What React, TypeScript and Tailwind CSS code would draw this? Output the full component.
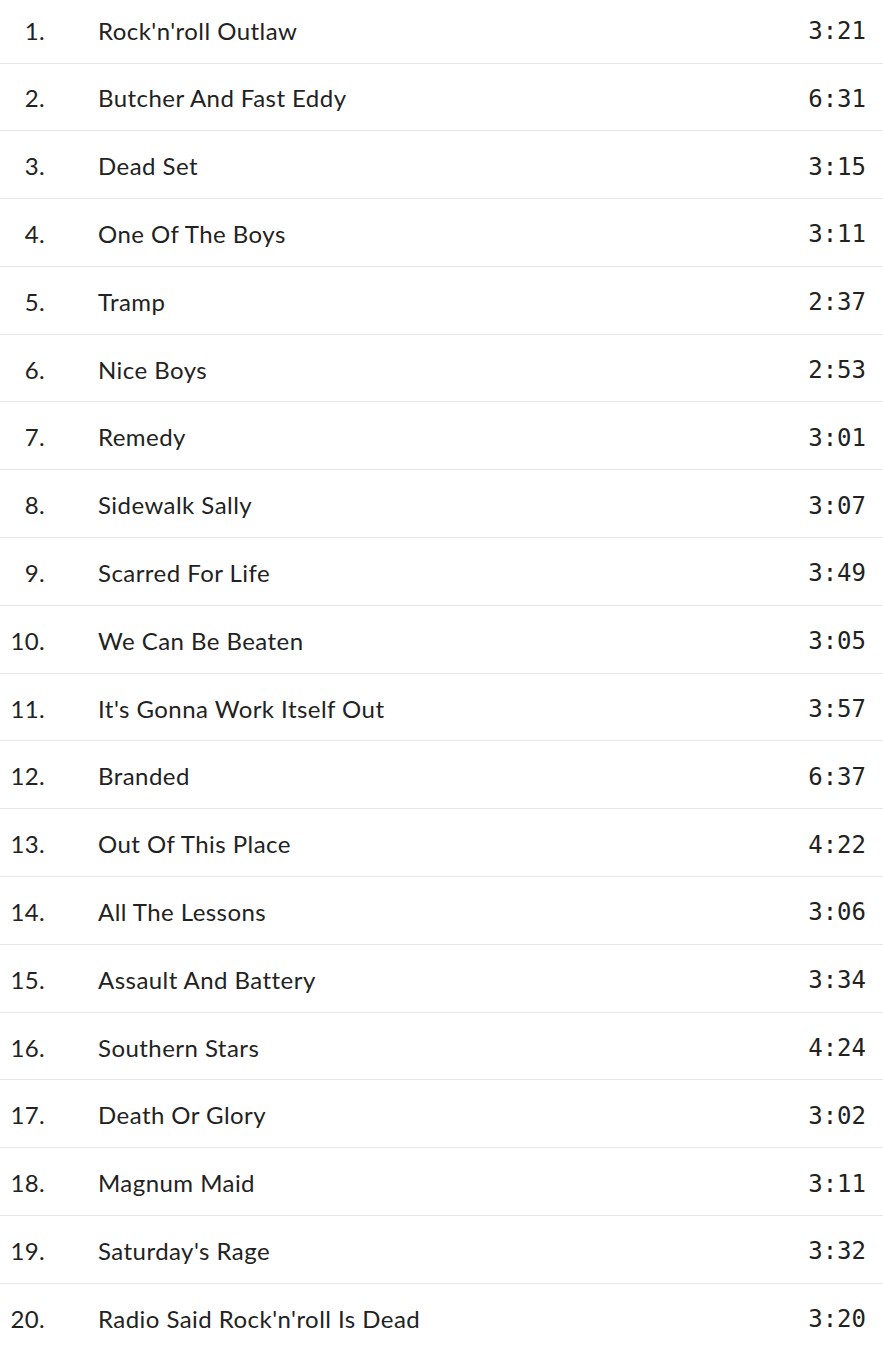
const tracks: [string, string][] = [
  ["Rock'n'roll Outlaw", '3:21'],
  ['Butcher And Fast Eddy', '6:31'],
  ['Dead Set', '3:15'],
  ['One Of The Boys', '3:11'],
  ['Tramp', '2:37'],
  ['Nice Boys', '2:53'],
  ['Remedy', '3:01'],
  ['Sidewalk Sally', '3:07'],
  ['Scarred For Life', '3:49'],
  ['We Can Be Beaten', '3:05'],
  ["It's Gonna Work Itself Out", '3:57'],
  ['Branded', '6:37'],
  ['Out Of This Place', '4:22'],
  ['All The Lessons', '3:06'],
  ['Assault And Battery', '3:34'],
  ['Southern Stars', '4:24'],
  ['Death Or Glory', '3:02'],
  ['Magnum Maid', '3:11'],
  ["Saturday's Rage", '3:32'],
  ["Radio Said Rock'n'roll Is Dead", '3:20'],
];

export default function App() {
  return (
    <div className="h-[1350px] overflow-hidden bg-white text-[#222]">
      <ol className="mt-[-4.3px] font-['Lato',sans-serif] text-[24px]">
        {tracks.map(([title, time], i) => (
          <li
            key={title}
            className="flex h-[67.8px] items-center border-b border-[#e6e6e6] pt-[3px]"
          >
            <span className="w-[45px] shrink-0 text-right tracking-[0.3px]">{i + 1}.</span>
            <span className="ml-[53px] flex-1 tracking-[0.45px]">{title}</span>
            <span className="pt-[1px] pr-[17px] font-['DejaVu_Sans_Mono',monospace]">{time}</span>
          </li>
        ))}
      </ol>
    </div>
  );
}
